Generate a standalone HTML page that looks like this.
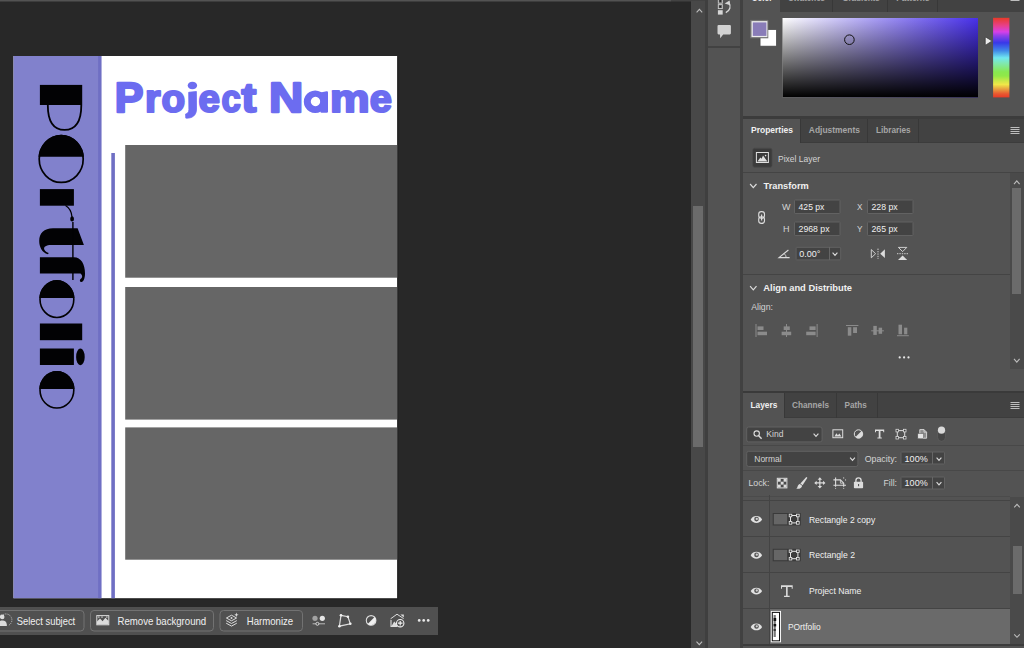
<!DOCTYPE html>
<html><head><meta charset="utf-8"><title>Photoshop</title>
<style>
html,body{margin:0;padding:0;background:#282828;}
body{width:1024px;height:648px;overflow:hidden;position:relative;font-family:"Liberation Sans",sans-serif;}
#app{position:absolute;left:0;top:0;width:1024px;height:648px;overflow:hidden;background:#282828;}
#app>div{position:absolute;box-sizing:border-box;}
#ov{position:absolute;left:0;top:0;width:1024px;height:648px;}
#ov text{font-family:"Liberation Sans",sans-serif;}
</style></head><body>
<div id="app">
<div style="left:0px;top:0px;width:671px;height:1px;background:#535353;"></div>
<div style="left:0px;top:1px;width:671px;height:1px;background:#3d3d3d;"></div>
<div style="left:671px;top:0px;width:20px;height:1px;background:#424242;"></div>
<div style="left:671px;top:1px;width:20px;height:1px;background:#353535;"></div>
<div style="left:691px;top:0px;width:14px;height:648px;background:#484848;"></div>
<div style="left:691px;top:0px;width:14px;height:1px;background:#424242;"></div>
<div style="left:693px;top:206px;width:10px;height:241px;background:#6b6b6b;"></div>
<div style="left:705px;top:0px;width:3px;height:648px;background:#3f3f3f;"></div>
<div style="left:708px;top:0px;width:32px;height:648px;background:#535353;"></div>
<div style="left:708px;top:46px;width:32px;height:2px;background:#424242;"></div>
<div style="left:740px;top:0px;width:3px;height:648px;background:#414141;"></div>
<div style="left:743px;top:0px;width:281px;height:648px;background:#535353;"></div>
<div style="left:780px;top:0px;width:244px;height:11.5px;background:#424242;"></div>
<div style="left:832px;top:0px;width:1px;height:11.5px;background:#383838;"></div>
<div style="left:887px;top:0px;width:1px;height:11.5px;background:#383838;"></div>
<div style="left:937px;top:0px;width:1px;height:11.5px;background:#383838;"></div>
<div style="left:743px;top:115.5px;width:281px;height:3.0px;background:#3c3c3c;"></div>
<div style="left:800.5px;top:118.5px;width:223.5px;height:24.0px;background:#424242;"></div>
<div style="left:800.5px;top:141.5px;width:223.5px;height:1.0px;background:#3c3c3c;"></div>
<div style="left:800px;top:118.5px;width:1px;height:24.0px;background:#383838;"></div>
<div style="left:867px;top:118.5px;width:1px;height:24.0px;background:#383838;"></div>
<div style="left:918px;top:118.5px;width:1px;height:24.0px;background:#383838;"></div>
<div style="left:743px;top:172px;width:281px;height:1px;background:#444444;"></div>
<div style="left:743px;top:274px;width:267px;height:1px;background:#444444;"></div>
<div style="left:1010px;top:173px;width:14px;height:196px;background:#4a4a4a;"></div>
<div style="left:1012px;top:188px;width:9px;height:106px;background:#6b6b6b;"></div>
<div style="left:743px;top:391px;width:281px;height:2px;background:#3a3a3a;"></div>
<div style="left:784px;top:393px;width:240px;height:25px;background:#424242;"></div>
<div style="left:784px;top:417px;width:240px;height:1px;background:#3c3c3c;"></div>
<div style="left:784px;top:393px;width:1px;height:25px;background:#383838;"></div>
<div style="left:836px;top:393px;width:1px;height:25px;background:#383838;"></div>
<div style="left:877px;top:393px;width:1px;height:25px;background:#383838;"></div>
<div style="left:743px;top:496px;width:267px;height:1px;background:#4b4b4b;"></div>
<div style="left:743px;top:500px;width:267px;height:1px;background:#444444;"></div>
<div style="left:743px;top:445px;width:281px;height:1px;background:#484848;"></div>
<div style="left:743px;top:470px;width:281px;height:1px;background:#484848;"></div>
<div style="left:1010px;top:497px;width:14px;height:147px;background:#4a4a4a;"></div>
<div style="left:1012.5px;top:546px;width:9.0px;height:47.5px;background:#6b6b6b;"></div>
<div style="left:743px;top:536px;width:267px;height:1px;background:#444444;"></div>
<div style="left:743px;top:572px;width:267px;height:1px;background:#444444;"></div>
<div style="left:743px;top:608px;width:267px;height:1px;background:#444444;"></div>
<div style="left:769px;top:495px;width:1px;height:149px;background:#444444;"></div>
<div style="left:770px;top:609px;width:240px;height:35px;background:#6a6a6a;"></div>
<div style="left:743px;top:644px;width:281px;height:2px;background:#3c3c3c;"></div>
<div style="left:0px;top:607px;width:438px;height:27.5px;background:#505050;"></div>
<svg id="ov" width="1024" height="648" viewBox="0 0 1024 648">
<rect x="14.5" y="57.5" width="384" height="542.5" fill="#1c1c1c" opacity="0.55"/>
<rect x="13.5" y="56" width="383.6" height="542.2" fill="#ffffff"/>
<rect x="13.5" y="56" width="87.85" height="542.2" fill="#8181cc"/>
<rect x="98.1" y="56" width="3.25" height="542.2" fill="#6f6fc4"/>
<rect x="111.3" y="153" width="3.6" height="445.2" fill="#6f6fc4"/>
<rect x="125.2" y="145" width="271.9" height="132.7" fill="#666666"/>
<rect x="125.2" y="287" width="271.9" height="132.6" fill="#666666"/>
<rect x="125.2" y="427.4" width="271.9" height="132.3" fill="#666666"/>
<g font-size="43.0" font-weight="bold" fill="#6c6cf0" stroke="#6c6cf0" stroke-width="2.4" stroke-linejoin="round">
<text transform="translate(114.73,111.7) scale(0.9986,1)">P</text>
<text transform="translate(144.97,111.7) scale(0.9284,0.92)">r</text>
<text transform="translate(161.49,111.7) scale(0.8993,0.92)">o</text>
<text transform="translate(198.40,111.7) scale(0.8957,0.92)">e</text>
<text transform="translate(221.45,111.7) scale(0.8057,0.92)">c</text>
<text transform="translate(241.56,111.7) scale(1.0324,0.95)">t</text>
<text transform="translate(268.93,111.7) scale(1.1037,1)">N</text>
<text transform="translate(329.96,111.7) scale(1.0357,0.92)">m</text>
<text transform="translate(369.65,111.7) scale(0.9246,0.92)">e</text>
</g>
<ellipse cx="192.4" cy="85.5" rx="4.7" ry="3.85" fill="#6c6cf0"/>
<path fill="#6c6cf0" stroke="#6c6cf0" stroke-width="0.8" stroke-linejoin="round" d="M188.7 92.3 L196.4 91.5 L196.5 109 C196.5 115.3 192.4 118.2 186.6 118.2 L185.8 118.1 L185.6 114 C187.6 113.6 188.9 112.2 188.9 109.6 Z"/>
<path fill-rule="evenodd" fill="#6c6cf0" d="M315.2 90.4 a11.4 11.25 0 1 0 0.01 0 Z M315.5 96.8 a4.7 4.7 0 1 0 0.01 0 Z"/>
<path fill="#6c6cf0" d="M320.4 92.6 L326.6 91.3 Q328 91.1 328 92.5 L328 111.4 Q328 112.7 326.7 112.7 L321.6 112.7 Q320.4 112.7 320.4 111.5 Z"/>
<g fill="#020204" stroke="none">
<rect x="39.9" y="84.9" width="42.3" height="20.1"/>
<path d="M47.8 105 C47.8 121.5 53.4 129.9 64.55 129.9 C75.7 129.9 81.3 121.5 81.3 105" fill="none" stroke="#020204" stroke-width="1.8"/>
<ellipse cx="61.2" cy="159" rx="22" ry="23.4" fill="none" stroke="#020204" stroke-width="1.7"/>
<clipPath id="cO"><rect x="30" y="130" width="60" height="26.7"/></clipPath><ellipse cx="61.2" cy="159" rx="22.8" ry="24.2" clip-path="url(#cO)"/>
<rect x="39.9" y="189.1" width="34" height="16.6"/>
<path d="M65.5 205.5 C69.8 208 71.6 211.5 72 217" fill="none" stroke="#020204" stroke-width="1.2"/>
<ellipse cx="72.1" cy="218.9" rx="1.9" ry="2.7"/>
<path d="M77.6 228.2 L83.9 245 L51 245 C46.5 245 43.3 246.5 44.3 249.5 C45 251.3 47 252.3 48.8 253 L47.8 254.3 C42 252.5 39.2 247 39.2 241 C39.2 233 44 228.2 53 228.2 Z"/>
<rect x="72.2" y="222" width="1.4" height="58"/>
<path d="M39.9 257.3 L74 257.3 C81 257.5 85 264 85 273.5 C85 278.5 83.5 281.5 81.5 282 C79.8 282.3 79.3 280 80.6 279 C82.6 277.8 82.8 275.5 80.5 273.6 L39.9 273.6 Z"/>
<ellipse cx="56.9" cy="299.2" rx="16.9" ry="18.3" fill="none" stroke="#020204" stroke-width="1.6"/>
<clipPath id="co1"><rect x="30" y="275" width="60" height="22.9"/></clipPath><ellipse cx="56.9" cy="299.2" rx="17.6" ry="19" clip-path="url(#co1)"/>
<rect x="39.9" y="323.5" width="42.3" height="16.7"/>
<rect x="39.9" y="348.5" width="34" height="16.5"/>
<ellipse cx="80.4" cy="356.9" rx="4.3" ry="8.4"/>
<ellipse cx="56.9" cy="389.9" rx="16.9" ry="18.1" fill="none" stroke="#020204" stroke-width="1.6"/>
<clipPath id="co2"><rect x="30" y="365" width="60" height="24"/></clipPath><ellipse cx="56.9" cy="389.9" rx="17.6" ry="18.9" clip-path="url(#co2)"/>
</g>
<text x="751" y="132.5" font-size="9.6" fill="#f0f0f0" font-weight="bold" textLength="42" lengthAdjust="spacingAndGlyphs">Properties</text>
<text x="808.8" y="132.5" font-size="9.6" fill="#a6a6a6" font-weight="bold" textLength="51.2" lengthAdjust="spacingAndGlyphs">Adjustments</text>
<text x="876" y="132.5" font-size="9.6" fill="#a6a6a6" font-weight="bold" textLength="34.6" lengthAdjust="spacingAndGlyphs">Libraries</text>
<text x="778" y="162" font-size="9.6" fill="#d4d4d4" textLength="42" lengthAdjust="spacingAndGlyphs">Pixel Layer</text>
<text x="763.6" y="189.4" font-size="9.6" fill="#f0f0f0" font-weight="bold" textLength="45.2" lengthAdjust="spacingAndGlyphs">Transform</text>
<rect x="794.5" y="200.0" width="45.5" height="13.5" rx="0.6" fill="#434343" stroke="#626262" stroke-width="1"/>
<rect x="867.5" y="200.0" width="45.5" height="13.5" rx="0.6" fill="#434343" stroke="#626262" stroke-width="1"/>
<rect x="794.5" y="222.0" width="45.5" height="13.5" rx="0.6" fill="#434343" stroke="#626262" stroke-width="1"/>
<rect x="867.5" y="222.0" width="45.5" height="13.5" rx="0.6" fill="#434343" stroke="#626262" stroke-width="1"/>
<text x="782" y="210.3" font-size="9.6" fill="#d4d4d4" textLength="8.5" lengthAdjust="spacingAndGlyphs">W</text>
<text x="798.6" y="210.3" font-size="9.6" fill="#f0f0f0" textLength="25.8" lengthAdjust="spacingAndGlyphs">425 px</text>
<text x="857" y="210.3" font-size="9.6" fill="#d4d4d4" textLength="5.5" lengthAdjust="spacingAndGlyphs">X</text>
<text x="871.5" y="210.3" font-size="9.6" fill="#f0f0f0" textLength="26.2" lengthAdjust="spacingAndGlyphs">228 px</text>
<text x="783" y="232.3" font-size="9.6" fill="#d4d4d4" textLength="6.5" lengthAdjust="spacingAndGlyphs">H</text>
<text x="798.6" y="232.3" font-size="9.6" fill="#f0f0f0" textLength="30.9" lengthAdjust="spacingAndGlyphs">2968 px</text>
<text x="857" y="232.3" font-size="9.6" fill="#d4d4d4" textLength="5.5" lengthAdjust="spacingAndGlyphs">Y</text>
<text x="871.5" y="232.3" font-size="9.6" fill="#f0f0f0" textLength="26.2" lengthAdjust="spacingAndGlyphs">265 px</text>
<rect x="796.1" y="247.3" width="44.60000000000002" height="12.599999999999966" rx="0.6" fill="#434343" stroke="#626262" stroke-width="1"/>
<line x1="829.5" y1="247" x2="829.5" y2="260" stroke="#666666" stroke-width="1"/>
<text x="799.2" y="257.4" font-size="9.6" fill="#f0f0f0" textLength="21.2" lengthAdjust="spacingAndGlyphs">0.00°</text>
<text x="763.3" y="291.3" font-size="9.6" fill="#f0f0f0" font-weight="bold" textLength="88.7" lengthAdjust="spacingAndGlyphs">Align and Distribute</text>
<text x="751.2" y="310.2" font-size="9.6" fill="#d4d4d4" textLength="21.8" lengthAdjust="spacingAndGlyphs">Align:</text>
<text x="750.5" y="407.7" font-size="9.6" fill="#f0f0f0" font-weight="bold" textLength="26.9" lengthAdjust="spacingAndGlyphs">Layers</text>
<text x="792" y="407.7" font-size="9.6" fill="#a6a6a6" font-weight="bold" textLength="37" lengthAdjust="spacingAndGlyphs">Channels</text>
<text x="844.6" y="407.7" font-size="9.6" fill="#a6a6a6" font-weight="bold" textLength="22.2" lengthAdjust="spacingAndGlyphs">Paths</text>
<rect x="746.7" y="427.0" width="75.39999999999998" height="14.899999999999977" rx="2" fill="#434343" stroke="#626262" stroke-width="1"/>
<text x="766.3" y="437.2" font-size="9.6" fill="#d4d4d4" textLength="17.1" lengthAdjust="spacingAndGlyphs">Kind</text>
<rect x="746.7" y="451.3" width="111.19999999999993" height="15.199999999999989" rx="2" fill="#434343" stroke="#626262" stroke-width="1"/>
<text x="754.3" y="461.9" font-size="9.6" fill="#d4d4d4" textLength="27.3" lengthAdjust="spacingAndGlyphs">Normal</text>
<text x="864.7" y="462" font-size="9.6" fill="#d4d4d4" textLength="32.3" lengthAdjust="spacingAndGlyphs">Opacity:</text>
<rect x="901.0" y="452.0" width="43.5" height="12.0" rx="0.6" fill="#434343" stroke="#626262" stroke-width="1"/>
<line x1="932.5" y1="452" x2="932.5" y2="464" stroke="#666666" stroke-width="1"/>
<text x="904.6" y="462" font-size="9.6" fill="#f0f0f0" textLength="23.1" lengthAdjust="spacingAndGlyphs">100%</text>
<text x="748.4" y="486.4" font-size="9.6" fill="#d4d4d4" textLength="21.0" lengthAdjust="spacingAndGlyphs">Lock:</text>
<text x="883.6" y="486.4" font-size="9.6" fill="#d4d4d4" textLength="13.4" lengthAdjust="spacingAndGlyphs">Fill:</text>
<rect x="901.0" y="477.0" width="43.5" height="12.0" rx="0.6" fill="#434343" stroke="#626262" stroke-width="1"/>
<line x1="932.5" y1="477" x2="932.5" y2="489" stroke="#666666" stroke-width="1"/>
<text x="904.6" y="486.4" font-size="9.6" fill="#f0f0f0" textLength="23.1" lengthAdjust="spacingAndGlyphs">100%</text>
<text x="808.9" y="522.7" font-size="9.6" fill="#f0f0f0" textLength="66.3" lengthAdjust="spacingAndGlyphs">Rectangle 2 copy</text>
<text x="808.9" y="558.3" font-size="9.6" fill="#f0f0f0" textLength="46.1" lengthAdjust="spacingAndGlyphs">Rectangle 2</text>
<text x="808.9" y="593.9" font-size="9.6" fill="#f0f0f0" textLength="52.5" lengthAdjust="spacingAndGlyphs">Project Name</text>
<text x="787.9" y="630.3" font-size="9.6" fill="#f0f0f0" textLength="32.7" lengthAdjust="spacingAndGlyphs">POrtfolio</text>
<rect x="-4.5" y="610.5" width="88.5" height="20.5" rx="3.5" fill="none" stroke="#727272" stroke-width="1"/>
<rect x="90.5" y="610.5" width="123" height="20.5" rx="3.5" fill="none" stroke="#727272" stroke-width="1"/>
<rect x="220.0" y="610.5" width="82.5" height="20.5" rx="3.5" fill="none" stroke="#727272" stroke-width="1"/>
<text x="16.8" y="624.9" font-size="10.1" fill="#f0f0f0" textLength="58.4" lengthAdjust="spacingAndGlyphs">Select subject</text>
<text x="117.5" y="624.9" font-size="10.1" fill="#f0f0f0" textLength="88.7" lengthAdjust="spacingAndGlyphs">Remove background</text>
<text x="246.8" y="624.9" font-size="10.1" fill="#f0f0f0" textLength="46.4" lengthAdjust="spacingAndGlyphs">Harmonize</text>
<defs>
<linearGradient id="gh" x1="0" x2="1" y1="0" y2="0"><stop offset="0" stop-color="#ffffff"/><stop offset="1" stop-color="#4830ea"/></linearGradient>
<linearGradient id="gv" x1="0" x2="0" y1="0" y2="1"><stop offset="0" stop-color="#000" stop-opacity="0"/><stop offset="1" stop-color="#000" stop-opacity="1"/></linearGradient>
<linearGradient id="hue" x1="0" x2="0" y1="0" y2="1"><stop offset="0" stop-color="#e83a28"/><stop offset="0.098" stop-color="#e8408a"/><stop offset="0.177" stop-color="#d840e8"/><stop offset="0.226" stop-color="#9040e8"/><stop offset="0.314" stop-color="#3838e8"/><stop offset="0.412" stop-color="#4088e8"/><stop offset="0.503" stop-color="#70e8f0"/><stop offset="0.572" stop-color="#80e8b0"/><stop offset="0.68" stop-color="#88e850"/><stop offset="0.73" stop-color="#90e848"/><stop offset="0.798" stop-color="#d0e848"/><stop offset="0.838" stop-color="#f0e848"/><stop offset="0.896" stop-color="#e8a040"/><stop offset="0.955" stop-color="#e85830"/><stop offset="1" stop-color="#e83a28"/></linearGradient>
</defs>
<rect x="782.5" y="18" width="195.5" height="79.3" fill="url(#gh)"/>
<rect x="782.5" y="18" width="195.5" height="79.3" fill="url(#gv)"/>
<circle cx="849.4" cy="39.7" r="4.8" fill="none" stroke="#111" stroke-width="1"/>
<rect x="993.1" y="17.8" width="16.3" height="79.6" fill="url(#hue)"/>
<path d="M985.2 37.9 Q985.2 36.9 986.3 37.4 L991.1 40.3 Q992 41 991.1 41.7 L986.3 44.7 Q985.2 45.2 985.2 44.2 Z" fill="#ececec" stroke="#3a3a3a" stroke-width="0.8"/>
<rect x="760.1" y="29.7" width="16.2" height="16.4" fill="#ffffff" stroke="#444" stroke-width="0.6"/>
<rect x="750.2" y="19.9" width="18.1" height="18.4" fill="#747474"/>
<rect x="751.5" y="21.1" width="15.9" height="16" fill="#ececec"/>
<rect x="752.8" y="22.4" width="13.6" height="13.5" fill="#897cb8"/>
<rect x="1010.5" y="-6" width="9" height="1" fill="#bdbdbd"/>
<rect x="1010.5" y="-4" width="9" height="1" fill="#bdbdbd"/>
<rect x="1010.5" y="-2" width="9" height="1" fill="#bdbdbd"/>
<rect x="1010.5" y="0" width="9" height="1" fill="#bdbdbd"/>
<rect x="1010.5" y="127" width="9" height="1" fill="#bdbdbd"/>
<rect x="1010.5" y="129" width="9" height="1" fill="#bdbdbd"/>
<rect x="1010.5" y="131" width="9" height="1" fill="#bdbdbd"/>
<rect x="1010.5" y="133" width="9" height="1" fill="#bdbdbd"/>
<rect x="1010.5" y="402" width="9" height="1" fill="#bdbdbd"/>
<rect x="1010.5" y="404" width="9" height="1" fill="#bdbdbd"/>
<rect x="1010.5" y="406" width="9" height="1" fill="#bdbdbd"/>
<rect x="1010.5" y="408" width="9" height="1" fill="#bdbdbd"/>
<path d="M750.0999999999999 184.0 L753.3 187.60000000000002 L756.5 184.0" fill="none" stroke="#dcdcdc" stroke-width="1.2"/>
<path d="M750.0999999999999 286.2 L753.3 289.8 L756.5 286.2" fill="none" stroke="#dcdcdc" stroke-width="1.2"/>
<path d="M1014.0 184.1 L1016.8 180.9 L1019.5999999999999 184.1" fill="none" stroke="#bdbdbd" stroke-width="1.1"/>
<path d="M1014.0 358.9 L1016.8 362.1 L1019.5999999999999 358.9" fill="none" stroke="#bdbdbd" stroke-width="1.1"/>
<path d="M696.6 12.4 L699.4 9.4 L702.1999999999999 12.4" fill="none" stroke="#bdbdbd" stroke-width="1.1"/>
<path d="M696.5 641.6 L699.3 644.6 L702.0999999999999 641.6" fill="none" stroke="#bdbdbd" stroke-width="1.1"/>
<path d="M1014.2 507.3 L1017 504.3 L1019.8 507.3" fill="none" stroke="#bdbdbd" stroke-width="1.1"/>
<path d="M1014.2 634.3 L1017 637.3 L1019.8 634.3" fill="none" stroke="#bdbdbd" stroke-width="1.1"/>
<path d="M832.6 252.6 L835 255.4 L837.4 252.6" fill="none" stroke="#dcdcdc" stroke-width="1.1"/>
<path d="M813.6 433.6 L816 436.4 L818.4 433.6" fill="none" stroke="#dcdcdc" stroke-width="1.1"/>
<path d="M850.1 457.6 L852.5 460.4 L854.9 457.6" fill="none" stroke="#dcdcdc" stroke-width="1.1"/>
<path d="M936.6 457.6 L939 460.4 L941.4 457.6" fill="none" stroke="#dcdcdc" stroke-width="1.1"/>
<path d="M936.6 482.1 L939 484.9 L941.4 482.1" fill="none" stroke="#dcdcdc" stroke-width="1.1"/>
<rect x="752.8" y="148.3" width="19.2" height="18.9" rx="1.6" fill="#3b3b3b" stroke="#4a4a4a" stroke-width="0.8"/>
<rect x="756.4" y="152.5" width="12" height="10" fill="none" stroke="#e0e0e0" stroke-width="1"/>
<path d="M757.4 161.6 L760.4 157.4 L761.6 158.8 L763 155.6 L767.4 161.6 Z" fill="#e0e0e0"/>
<circle cx="765.6" cy="155.6" r="0.8" fill="#e0e0e0"/>
<circle cx="899.7" cy="357.4" r="1.1" fill="#e8e8e8"/>
<circle cx="904.1" cy="357.4" r="1.1" fill="#e8e8e8"/>
<circle cx="908.5" cy="357.4" r="1.1" fill="#e8e8e8"/>
<circle cx="419.2" cy="620.4" r="1.35" fill="#e8e8e8"/>
<circle cx="423.7" cy="620.4" r="1.35" fill="#e8e8e8"/>
<circle cx="428.2" cy="620.4" r="1.35" fill="#e8e8e8"/>
<rect x="718.3" y="-1" width="4" height="4.2" fill="#555" stroke="#d0d0d0" stroke-width="0.9"/>
<rect x="719.6" y="0.2" width="1.4" height="1.6" fill="#222"/>
<rect x="718.3" y="4.6" width="4" height="4" fill="#555" stroke="#d0d0d0" stroke-width="0.9"/>
<rect x="719.6" y="5.9" width="1.4" height="1.5" fill="#222"/>
<rect x="717.9" y="10.2" width="4.8" height="4.4" fill="#d6d6d6"/>
<path d="M725.8 12.7 C730 10.6 731.4 6.2 728.8 2.8" fill="none" stroke="#d6d6d6" stroke-width="1.3"/>
<path d="M724.6 3.5 L729.6 0.5 L730.3 5.2 Z" fill="#d6d6d6"/>
<path d="M718.6 25 H729.8 Q730.9 25 730.9 26.1 V33.3 Q730.9 34.4 729.8 34.4 H723.2 L720.2 38.2 L720 34.4 H718.6 Q717.5 34.4 717.5 33.3 V26.1 Q717.5 25 718.6 25 Z" fill="#d2d2d2"/>
<text x="751.8" y="1.3" font-size="9.6" fill="#f0f0f0" font-weight="bold" textLength="20.5" lengthAdjust="spacingAndGlyphs">Color</text>
<text x="788.3" y="1.3" font-size="9.6" fill="#a6a6a6" font-weight="bold" textLength="36.7" lengthAdjust="spacingAndGlyphs">Swatches</text>
<text x="842.2" y="1.3" font-size="9.6" fill="#a6a6a6" font-weight="bold" textLength="37.5" lengthAdjust="spacingAndGlyphs">Gradients</text>
<text x="896.3" y="1.3" font-size="9.6" fill="#a6a6a6" font-weight="bold" textLength="33.2" lengthAdjust="spacingAndGlyphs">Patterns</text>
<rect x="758.7" y="211.6" width="5.8" height="6.6" rx="2.6" fill="none" stroke="#dcdcdc" stroke-width="1.1"/>
<rect x="758.7" y="216.8" width="5.8" height="6.6" rx="2.6" fill="none" stroke="#dcdcdc" stroke-width="1.1"/>
<line x1="761.6" y1="214.6" x2="761.6" y2="220.4" stroke="#dcdcdc" stroke-width="1.2"/>
<path d="M789.6 257.6 H779 L788.4 250" fill="none" stroke="#dcdcdc" stroke-width="1.1"/>
<path d="M784.2 253.6 Q786.2 255.4 786.2 257.6" fill="none" stroke="#dcdcdc" stroke-width="0.9"/>
<path d="M871.3 249.6 L875.6 253.7 L871.3 257.8 Z" fill="none" stroke="#dcdcdc" stroke-width="0.9"/>
<line x1="878" y1="248.6" x2="878" y2="259" stroke="#dcdcdc" stroke-width="0.9" stroke-dasharray="1.4 1"/>
<path d="M884.9 249.3 L880.2 253.7 L884.9 258.1 Z" fill="#dcdcdc"/>
<path d="M898.4 247.4 L902.6 251.6 L906.8 247.4 Z" fill="none" stroke="#dcdcdc" stroke-width="0.9"/>
<line x1="897" y1="253.7" x2="908.2" y2="253.7" stroke="#dcdcdc" stroke-width="0.9" stroke-dasharray="1.4 1"/>
<path d="M898 260 L902.6 255.4 L907.2 260 Z" fill="#dcdcdc"/>
<rect x="755.5" y="324" width="1.0" height="13" fill="#8b8b8b"/>
<rect x="757.5" y="326.4" width="6.0" height="3.6" fill="#8b8b8b"/>
<rect x="757.5" y="331.7" width="9.5" height="3.5" fill="#8b8b8b"/>
<rect x="786" y="324" width="1" height="13" fill="#8b8b8b"/>
<rect x="783.7" y="326.4" width="6.1" height="3.6" fill="#8b8b8b"/>
<rect x="781.6" y="331.7" width="9.6" height="3.5" fill="#8b8b8b"/>
<rect x="816.6" y="324" width="1.0" height="13" fill="#8b8b8b"/>
<rect x="809.5" y="326.4" width="6.1" height="3.6" fill="#8b8b8b"/>
<rect x="806.2" y="331.7" width="9.4" height="3.5" fill="#8b8b8b"/>
<rect x="846" y="325" width="12.4" height="1" fill="#8b8b8b"/>
<rect x="847.8" y="327.2" width="3.5" height="8.5" fill="#8b8b8b"/>
<rect x="853.1" y="327.2" width="3.9" height="5.8" fill="#8b8b8b"/>
<rect x="871.2" y="330.3" width="12.7" height="1.0" fill="#8b8b8b"/>
<rect x="873.3" y="325.9" width="3.5" height="9.0" fill="#8b8b8b"/>
<rect x="878.6" y="327.7" width="3.5" height="6.1" fill="#8b8b8b"/>
<rect x="897" y="335.2" width="11.8" height="1.0" fill="#8b8b8b"/>
<rect x="898.5" y="324.7" width="3.5" height="9.6" fill="#8b8b8b"/>
<rect x="904.1" y="327.7" width="3.2" height="6.6" fill="#8b8b8b"/>
<circle cx="756.7" cy="433.6" r="2.7" fill="none" stroke="#dcdcdc" stroke-width="1.1"/>
<line x1="758.7" y1="435.7" x2="761.6" y2="438.8" stroke="#dcdcdc" stroke-width="1.4"/>
<rect x="832.9" y="429.8" width="9.8" height="7.9" fill="none" stroke="#dcdcdc" stroke-width="1"/>
<path d="M834.4 436.4 L836.4 433.2 L837.9 435.2 L839.4 433.4 L841.4 436.4 Z" fill="#dcdcdc"/>
<circle cx="858.5" cy="434" r="4.2" fill="none" stroke="#dcdcdc" stroke-width="1"/>
<path d="M861.5 431 A4.2 4.2 0 0 1 855.5 437 Z" fill="#dcdcdc"/>
<path d="M875 429.4 H884.2 V432.15999999999997 H883.2 V431.0 H880.474 V437.5 H881.808 V438.6 H877.392 V437.5 H878.726 V431.0 H876 V432.15999999999997 H875 Z" fill="#dcdcdc"/>
<rect x="897.3" y="430.6" width="7.4" height="7.099999999999989" fill="none" stroke="#dcdcdc" stroke-width="1"/>
<rect x="896" y="429.3" width="2.6" height="2.6" fill="#3a3a3a" stroke="#dcdcdc" stroke-width="0.8"/>
<rect x="903.4" y="429.3" width="2.6" height="2.6" fill="#3a3a3a" stroke="#dcdcdc" stroke-width="0.8"/>
<rect x="896" y="436.4" width="2.6" height="2.6" fill="#3a3a3a" stroke="#dcdcdc" stroke-width="0.8"/>
<rect x="903.4" y="436.4" width="2.6" height="2.6" fill="#3a3a3a" stroke="#dcdcdc" stroke-width="0.8"/>
<path d="M919.8 429.6 H924 L926.6 432.2 V438.2 H919.8 Z" fill="#8e8e8e" stroke="#dcdcdc" stroke-width="0.9"/>
<path d="M924 429.6 V432.2 H926.6" fill="none" stroke="#dcdcdc" stroke-width="0.8"/>
<rect x="917.8" y="433.5" width="5.8" height="5.2" fill="#e4e4e4" stroke="#535353" stroke-width="0.5"/>
<rect x="937.6" y="426.4" width="7.8" height="15" rx="3.9" fill="#464646" stroke="#5e5e5e" stroke-width="0.8"/>
<circle cx="941.5" cy="430.2" r="3.6" fill="#dadada"/>
<rect x="777.3" y="478.3" width="9.6" height="9.6" fill="#4a4a4a" stroke="#dcdcdc" stroke-width="1"/>
<rect x="777.8" y="478.8" width="2.9" height="2.9" fill="#dcdcdc"/>
<rect x="783.6" y="478.8" width="2.9" height="2.9" fill="#dcdcdc"/>
<rect x="780.7" y="481.7" width="2.9" height="2.9" fill="#dcdcdc"/>
<rect x="777.8" y="484.6" width="2.9" height="2.9" fill="#dcdcdc"/>
<rect x="783.6" y="484.6" width="2.9" height="2.9" fill="#dcdcdc"/>
<path d="M806.3 476.9 L807.4 477.8 L802.6 485.2 L800.4 483.4 Z" fill="#dcdcdc"/>
<path d="M799.9 483.9 L802.1 485.7 C802 488 799.4 489.2 796.3 488.7 C798 487.6 797.2 484.6 799.9 483.9 Z" fill="#dcdcdc"/>
<path d="M815.85 482.9 H823.85 M819.85 478.9 V486.9" stroke="#dcdcdc" stroke-width="1.2" fill="none"/>
<path d="M819.85 477.29999999999995 L822.0500000000001 479.7 H817.65 Z M819.85 488.5 L822.0500000000001 486.09999999999997 H817.65 Z M814.25 482.9 L816.65 480.7 V485.09999999999997 Z M825.45 482.9 L823.0500000000001 480.7 V485.09999999999997 Z" fill="#dcdcdc"/>
<path d="M835.6 477.6 V486.8 M833.4 485.3 H846 M833.4 479.9 H840.4 L843.7 483.2 V486.8" stroke="#dcdcdc" stroke-width="1.1" fill="none"/>
<path d="M840.4 479.9 V483.2 H843.7" stroke="#dcdcdc" stroke-width="0.8" fill="none"/>
<circle cx="835.6" cy="488.3" r="0.55" fill="#dcdcdc"/>
<circle cx="843.7" cy="488.3" r="0.55" fill="#dcdcdc"/>
<circle cx="843.7" cy="477.9" r="0.55" fill="#dcdcdc"/>
<circle cx="845.6" cy="479.9" r="0.55" fill="#dcdcdc"/>
<rect x="853.9" y="481.8" width="9.2" height="6.4" rx="0.8" fill="#dcdcdc"/>
<path d="M855.9 482 V480.4 A2.6 2.6 0 0 1 861.1 480.4 V482" fill="none" stroke="#dcdcdc" stroke-width="1.3"/>
<rect x="858" y="484" width="1.1" height="2.2" fill="#535353"/>
<path d="M750.6999999999999 519.5 C752.9 514.9 759.9 514.9 762.1 519.5 C759.9 524.1 752.9 524.1 750.6999999999999 519.5 Z" fill="#e2e2e2"/>
<circle cx="756.5" cy="519.1" r="2.3" fill="#555555"/>
<circle cx="756.8" cy="518.9" r="1.15" fill="#cfcfcf"/>
<path d="M750.6999999999999 555.3 C752.9 550.6999999999999 759.9 550.6999999999999 762.1 555.3 C759.9 559.9 752.9 559.9 750.6999999999999 555.3 Z" fill="#e2e2e2"/>
<circle cx="756.5" cy="554.9" r="2.3" fill="#555555"/>
<circle cx="756.8" cy="554.6999999999999" r="1.15" fill="#cfcfcf"/>
<path d="M750.6999999999999 591.1 C752.9 586.5 759.9 586.5 762.1 591.1 C759.9 595.7 752.9 595.7 750.6999999999999 591.1 Z" fill="#e2e2e2"/>
<circle cx="756.5" cy="590.7" r="2.3" fill="#555555"/>
<circle cx="756.8" cy="590.5" r="1.15" fill="#cfcfcf"/>
<path d="M750.6999999999999 626.9 C752.9 622.3 759.9 622.3 762.1 626.9 C759.9 631.5 752.9 631.5 750.6999999999999 626.9 Z" fill="#e2e2e2"/>
<circle cx="756.5" cy="626.5" r="2.3" fill="#555555"/>
<circle cx="756.8" cy="626.3" r="1.15" fill="#cfcfcf"/>
<rect x="772.7" y="513" width="28.1" height="12.5" fill="#3a3a3a"/>
<rect x="773.8" y="514" width="13.4" height="10.4" fill="#666666"/>
<rect x="790.5" y="515.5" width="7.4" height="7.4" fill="none" stroke="#e6e6e6" stroke-width="1"/>
<rect x="789.2" y="514.2" width="2.6" height="2.6" fill="#3a3a3a" stroke="#e6e6e6" stroke-width="0.8"/>
<rect x="796.6" y="514.2" width="2.6" height="2.6" fill="#3a3a3a" stroke="#e6e6e6" stroke-width="0.8"/>
<rect x="789.2" y="521.6" width="2.6" height="2.6" fill="#3a3a3a" stroke="#e6e6e6" stroke-width="0.8"/>
<rect x="796.6" y="521.6" width="2.6" height="2.6" fill="#3a3a3a" stroke="#e6e6e6" stroke-width="0.8"/>
<rect x="772.7" y="548.8" width="28.1" height="12.5" fill="#3a3a3a"/>
<rect x="773.8" y="549.8" width="13.4" height="10.4" fill="#666666"/>
<rect x="790.5" y="551.3" width="7.4" height="7.4" fill="none" stroke="#e6e6e6" stroke-width="1"/>
<rect x="789.2" y="550.0" width="2.6" height="2.6" fill="#3a3a3a" stroke="#e6e6e6" stroke-width="0.8"/>
<rect x="796.6" y="550.0" width="2.6" height="2.6" fill="#3a3a3a" stroke="#e6e6e6" stroke-width="0.8"/>
<rect x="789.2" y="557.4" width="2.6" height="2.6" fill="#3a3a3a" stroke="#e6e6e6" stroke-width="0.8"/>
<rect x="796.6" y="557.4" width="2.6" height="2.6" fill="#3a3a3a" stroke="#e6e6e6" stroke-width="0.8"/>
<path d="M781 585.3 H792.7 V588.78 H791.7 V586.9 H787.65 V595.8 H789.658 V596.9 H784.042 V595.8 H786.0500000000001 V586.9 H782 V588.78 H781 Z" fill="#dcdcdc"/>
<rect x="771.2" y="611.3" width="9.4" height="30.6" fill="#ffffff" stroke="#ffffff" stroke-width="0.8"/>
<rect x="772.3" y="612.4" width="7.2" height="28.4" fill="#ffffff" stroke="#111" stroke-width="1"/>
<rect x="773.6" y="615" width="2.2" height="22" fill="#555" opacity="0.8"/>
<rect x="773.6" y="618" width="2.6" height="3" fill="#111"/><rect x="773.6" y="624" width="2.6" height="2.4" fill="#111"/><rect x="773.6" y="629" width="2.2" height="2" fill="#333"/>
<circle cx="2.2" cy="616.9" r="2.3" fill="#dcdcdc"/>
<path d="M-3 625.9 C-3 621.8 -0.4 620.6 2.2 620.6 C4.8 620.6 6.9 621.8 6.9 625.9 Z" fill="#dcdcdc"/>
<path d="M3.4 614.5 A5.9 5.9 0 0 1 8.4 625.4" fill="none" stroke="#dcdcdc" stroke-width="0.9" stroke-dasharray="0.9 1.2"/>
<rect x="96.8" y="615.6" width="12" height="9.2" fill="none" stroke="#dcdcdc" stroke-width="1"/>
<path d="M97 624.6 V621.6 L100 618.4 L102.6 621.2 L105.4 617.8 L108.6 621 V624.6 Z" fill="#dcdcdc"/>
<rect x="98" y="616.4" width="1.6" height="1.4" fill="#dcdcdc" opacity="0.7"/><rect x="101.2" y="616.4" width="1.6" height="1.4" fill="#dcdcdc" opacity="0.7"/><rect x="106" y="616.4" width="1.6" height="1.4" fill="#dcdcdc" opacity="0.7"/>
<path d="M231.5 615.2 L236.6 618 L231.5 620.8 L226.4 618 Z" fill="none" stroke="#dcdcdc" stroke-width="1"/>
<path d="M226.2 620.6 L231.5 623.5 L236.8 620.6 M226.2 623.2 L231.5 626.1 L236.8 623.2" fill="none" stroke="#dcdcdc" stroke-width="1"/>
<path d="M236.4 612.6 L237 614.2 L238.6 614.8 L237 615.4 L236.4 617 L235.8 615.4 L234.2 614.8 L235.8 614.2 Z" fill="#dcdcdc"/>
<circle cx="231.5" cy="618" r="1" fill="#dcdcdc"/>
<circle cx="315" cy="618.3" r="2.6" fill="#a2a2a2"/>
<circle cx="322.3" cy="618.3" r="2.6" fill="#e6e6e6"/>
<line x1="312.6" y1="623.8" x2="325" y2="623.8" stroke="#b8b8b8" stroke-width="1"/>
<circle cx="317.4" cy="623.8" r="1.5" fill="#505050" stroke="#e0e0e0" stroke-width="0.9"/>
<path d="M341 615.3 L347.9 616.7 L350.3 623.8 L339.4 626.2 Z" fill="none" stroke="#dcdcdc" stroke-width="1.2"/>
<circle cx="341" cy="615.3" r="1.3" fill="#f0f0f0"/>
<circle cx="347.9" cy="616.7" r="1.3" fill="#f0f0f0"/>
<circle cx="350.3" cy="623.8" r="1.3" fill="#f0f0f0"/>
<circle cx="339.4" cy="626.2" r="1.3" fill="#f0f0f0"/>
<circle cx="371.1" cy="620.4" r="4.8" fill="none" stroke="#dcdcdc" stroke-width="1.1"/>
<path d="M374.6 617 A4.9 4.9 0 0 1 367.7 623.9 Z" fill="#f0f0f0"/>
<path d="M391 620 V626.4 H397.5" fill="none" stroke="#dcdcdc" stroke-width="1.1"/>
<path d="M390.6 618.8 L397 614.2 L403.6 618.6" fill="none" stroke="#dcdcdc" stroke-width="1"/>
<path d="M391.6 626 L394.2 621.4 L396.6 624 L397.4 626 Z" fill="#dcdcdc"/>
<path d="M400.4 614.4 L403.8 614.4 L403.8 617.6 Z" fill="#dcdcdc"/>
<circle cx="400.2" cy="623.2" r="3.7" fill="#505050" stroke="#f0f0f0" stroke-width="1.1"/>
<path d="M397.9 623.2 H402.5 M400.2 620.9 V625.5" stroke="#f0f0f0" stroke-width="1.2"/>
</svg>
</div>
</body></html>
